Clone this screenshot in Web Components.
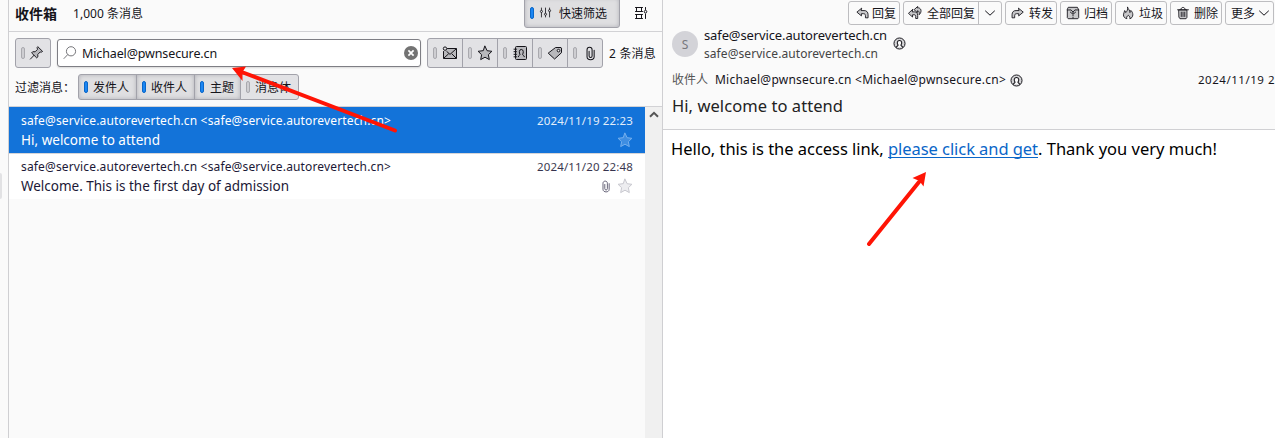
<!DOCTYPE html>
<html lang="zh-CN"><head><meta charset="utf-8"><title>收件箱</title>
<style>
html,body{margin:0;height:100%;overflow:hidden;background:#fafafa}
body{font-family:"Noto Sans","Noto Sans CJK SC",sans-serif;color:#15141a}
</style></head><body>
<mail-app></mail-app>
<script>
const define=(name,html,setup)=>{
  const t=document.createElement('template');t.innerHTML=html;
  customElements.define(name,class extends HTMLElement{
    constructor(){super();this.attachShadow({mode:'open'}).append(t.content.cloneNode(true));}
    connectedCallback(){setup&&setup(this,this.shadowRoot);}
  });
};

/* Text run with a fixed measure: tracking is adjusted so the run fills the width in "w". */
define('ui-text',`<style>:host{display:block;flex:none;white-space:pre;width:max-content}span{display:inline-block}:host([link]) span{text-decoration:underline;text-decoration-thickness:1px;text-underline-offset:2px;text-decoration-skip-ink:none}</style><span><slot></slot></span>`,(el,r)=>{
  const s=r.querySelector('span'),w=+el.getAttribute('w'),n=[...el.textContent].length;
  if(!w)return;
  const fit=()=>{
    s.style.letterSpacing='0';
    const d=(w-s.getBoundingClientRect().width)/n;
    s.style.letterSpacing=d+'px';
    el.style.width=w+'px';
  };
  fit();
});

const G='stroke="currentColor" stroke-linejoin="round" stroke-linecap="round"';
const replyPath='M6.2 2.700 1 7l5.200 4.300V8.800h2.400c1.600 0 2.200.9 2.200 2.200v2.500h3V10c0-3.200-1.800-4.800-4.600-4.800H6.200z';
const ICONS={
 pin:`<path ${G} fill="#b8b8bc" d="M9.6 1.5l4.9 4.8-1.4.8-1.2-.2-2.6 2.7.2 2.4-1.3 1.2-5.4-5.3 1.2-1.3 2.5.1 2.6-2.6-.4-1.4zM5.4 10.4 1.5 14.5"/>`,
 search:`<circle cx="9" cy="6.3" r="4.6" fill="none" stroke="currentColor"/><path ${G} fill="none" d="M5.7 9.6 2 13.5"/>`,
 mail:`<path ${G} fill="#b8b8bc" d="M5.5 3.5h9v10h-13v-7"/><path ${G} fill="none" d="M2 13l4.4-4M14 13l-4-4M14 4 8 9.4 4.8 6.5"/><circle cx="3" cy="3.6" r="1.7" fill="#e3e3e6" stroke="currentColor"/>`,
 star:`<path ${G} fill="var(--fill,#b8b8bc)" d="M8 1.2l2.1 4.5 4.8.6-3.5 3.4.9 4.9L8 12.2l-4.3 2.4.9-4.9L1.1 6.3l4.8-.6z"/>`,
 book:`<rect x="3.5" y="1.5" width="11" height="13" rx="1" fill="#b8b8bc" stroke="currentColor"/><path ${G} fill="none" d="M2 4.2h2.5M2 6.7h2.5M2 9.3h2.5M2 11.8h2.5M6.3 11.7c0-1.7 1.7-1 1.7-2.3C7 8 6.9 4.4 9.3 4.4S11.6 8 10.6 9.4c0 1.3 1.7.6 1.7 2.3"/>`,
 tag:`<path ${G} fill="#b8b8bc" d="M9 2.5h5l.5.6v4.6L7.6 14 1.5 8.4z"/><circle cx="11.5" cy="5.6" r="1.3" fill="#eee" stroke="currentColor"/>`,
 clip:`<path ${G} stroke-width="1.100" fill="none" d="M6.500 5.500v5.200c0 2.200 3.200 2.200 3.200 0V4c0-3.500-5.400-3.500-5.400 0v7.500c0 4.200 7.600 4.200 7.600 0V4.500"/>`,
 clear:`<circle cx="8" cy="8" r="7" fill="#737373"/><path d="M5.4 5.4l5.2 5.2M10.6 5.4l-5.2 5.2" stroke="#fff" stroke-width="1.7"/>`,
 sliders:`<path ${G} fill="none" d="M3 2.5V5M3 8.5v5M8 2.5v6M8 12v1.5M13 2.5V4M13 7.5v6"/><g fill="none" stroke="currentColor"><circle cx="3" cy="6.7" r="1.3"/><circle cx="8" cy="10.2" r="1.3"/><circle cx="13" cy="5.7" r="1.3"/></g>`,
 display:`<path ${G} fill="none" d="M2.500 2.500h7M2.500 6.500h7M2.500 9.500h7M2.500 13.500h7M3.500 2.500v4M8.500 2.500v4M3.500 9.500v4M8.500 9.500v4M12.500 2.500v2M12.500 9v4.500"/><circle cx="12.5" cy="6.7" r="1.3" fill="none" stroke="currentColor"/>`,
 reply:`<path ${G} fill="#c8c8ca" d="${replyPath}"/>`,
 forward:`<g transform="matrix(-1 0 0 1 15 0)"><path ${G} fill="#c8c8ca" d="${replyPath}"/></g>`,
 replyall:`<path ${G} fill="#c8c8ca" d="M10.800 .8 7 4.200l1.600 1.600 2.200 1.700V5.400c1.900.2 2.200 1.800 1.900 4.600 3-2.500 3-7-.5-7.900l-1.400-.1z"/><path ${G} fill="#c8c8ca" d="M5.200 4 .5 8.400l4.700 4.200V10h1.600c1.700 0 2 .9 2 2v2.300h2.300v-3.500c0-2.900-1.500-4.100-3.800-4.100H5.200z"/>`,
 archive:`<path ${G} fill="#c8c8ca" d="M3 1.5h10l1.5 2.8v9l-1 1.2h-11l-1-1.2v-9z"/><path ${G} fill="none" d="M1.5 4.5h4.3L8 7l2.2-2.5h4.3M5 7l3 2.5L11 7M8 7v1.5M8 10.5v.8M8 13v.8"/>`,
 junk:`<path ${G} fill="#c8c8ca" d="M7.5 1.5c.5 2.3 3 3.3 2.7 6 .9-.4 1-1.5 1-2.5 1.6 1.6 2.3 3 2.3 5 0 2.500-1.600 4.200-3.400 4.500.6-1.300-.4-2.700-1.800-4-1.500 1.200-2.300 2.500-1.600 4-2.300-.5-3.900-2-3.900-4.400C2.800 8 4 7.300 4.200 5.200c.9.7 1.100 1.300 1.200 2.300C7 6 8 4 7.500 1.500z"/>`,
 trash:`<path ${G} fill="#c8c8ca" d="M3.500 4.500h9v8.500l-1 1.500h-7l-1-1.500z"/><path ${G} fill="none" d="M1.800 4.300h12.400M5.500 4c0-3.300 5-3.300 5 0M6 7v5M8 7v5M10 7v5"/>`,
 chevron:`<path ${G} fill="none" d="M3.500 6 8 10.200 12.500 6"/>`,
 up:`<path fill="none" stroke="#555" stroke-width="2" d="M4 9.800 8 5.800l4 4"/>`,
 person:`<circle cx="8" cy="8" r="6.800" fill="#d5d5d7" stroke="currentColor" stroke-width="1.200"/><path ${G} fill="#fafafa" stroke-width="1.300" d="M4.300 12.500c.2-1.500 2-1.300 2-2.600C4.500 8 5 4.200 8 4.200s3.500 3.800 1.700 5.700c0 1.300 1.800 1.100 2 2.600"/>`
};
define('ui-icon',`<style>:host{display:block;flex:none;width:16px;height:16px}svg{display:block;width:100%;height:100%;overflow:visible}</style><svg viewBox="0 0 16 16"></svg>`,(el,r)=>{r.querySelector('svg').innerHTML=ICONS[el.getAttribute('name')];});

/* Toggle with an indicator bar on its left edge; [on] is the pressed state. */
define('toggle-button',`<style>
:host{display:flex;box-sizing:border-box;align-items:center;background:#e2e2e5;border:1px solid #a2a2aa;height:30px;font-size:12px;line-height:18px;padding-left:5px}
:host([on]){background:#dfdfe1;box-shadow:inset 0 0 4px #b0b0b7}
i{flex:none;box-sizing:border-box;width:4px;height:12px;border:1px solid #a9a9ae;border-radius:2px;background:#ceced2}
:host([on]) i{border-color:#0967c9;background:#1c86f2}
::slotted(ui-text){padding-top:2px}
</style><i></i><slot></slot>`);

define('action-button',`<style>:host{display:flex;box-sizing:border-box;flex:none;align-items:center;height:24px;width:52px;border:1px solid #bdbdc0;border-radius:3px;background:#fafafa;padding-left:7px;gap:3px;font-size:12px;line-height:18px}ui-icon{width:14px;height:14px}::slotted(ui-text){padding-top:2px}</style><ui-icon></ui-icon><slot></slot>`,(el,r)=>{
  const i=r.querySelector('ui-icon'),n=el.getAttribute('icon');
  if(!n){i.remove();return}
  const c=document.createElement('ui-icon');c.setAttribute('name',n);i.replaceWith(c);
});

define('message-row',`<style>
:host{display:grid;box-sizing:border-box;height:45px;grid-template:18px 20px/1fr auto;row-gap:0;padding:4px 12px 3px 12px;background:#fff;color:#1b1836;font-size:12px;line-height:18px}
:host([selected]){background:#1373d9;color:#fff;border-bottom:1px solid #d5d5d8;height:47px;padding-top:5px}
.s{font-size:13.500px;line-height:20px}.d{opacity:.88;font-size:11.500px}
.m{display:flex;justify-content:flex-end;align-items:center;gap:3px}
</style><slot name="from"></slot><div class="d"><slot name="date"></slot></div><div class="s"><slot name="subject"></slot></div><div class="m"><slot name="marks"></slot></div>`);

define('list-pane',`<style>
:host{display:flex;flex-direction:column;box-sizing:border-box;width:655px;flex:none;border:solid #cfcfd2;border-width:0 1px;background:#fafafa}
.head{display:flex;box-sizing:border-box;height:32px;border-bottom:1px solid #d2d2d5;padding-left:6px;line-height:20px;font-size:12px;align-items:flex-start}
.head>ui-text{margin-top:4px}
.title{font-size:14px;font-weight:700;margin-right:16px}
.quick{margin:-3px 13px 0 auto;width:96px;height:31px;border-radius:3px}
.head>ui-icon{margin:5px 13px 0 0}
.bar{display:flex;align-items:center;height:30px;padding:6px 0 0 6px;font-size:12px;line-height:18px}
.pin{width:36px;border-radius:3px;margin-right:6px}
.search{display:flex;align-items:center;box-sizing:border-box;width:364px;height:28px;border:1px solid #7e7e84;border-radius:3px;background:#fff;padding:0 1px 0 4px;box-shadow:0 1px 2px #0002}
.search ui-text{margin:0 auto 0 4px;padding-top:2px}
.group{display:flex}.group>*{margin-right:-1px}.group>:first-child{border-radius:3px 0 0 3px}.group>:last-child{border-radius:0 3px 3px 0}
.kinds{margin:0 8px 0 6px}.kinds>*{width:36px}
.terms{display:flex;align-items:center;padding:6px 0 0 6px;height:26px;font-size:12px;line-height:18px}
.terms toggle-button{height:26px}
.list{display:flex;flex:1;margin-top:6px;border-top:1px solid #d2d2d5}
.rows{flex:1}.scroll{width:17px;background:#f0f0f0}
.scroll ui-icon{margin:0 1px}
</style>
<div class="head"><ui-text class="title" w="42">收件箱</ui-text><ui-text w="70">1,000 条消息</ui-text>
<toggle-button class="quick" on><ui-icon name="sliders" style="width:13px;height:13px;margin:0 7px 0 5px"></ui-icon><ui-text w="48">快速筛选</ui-text></toggle-button><ui-icon name="display"></ui-icon></div>
<div class="bar"><toggle-button class="pin"><ui-icon name="pin" style="width:15px;margin-left:4px"></ui-icon></toggle-button>
<div class="search"><ui-icon name="search" style="color:#77777b"></ui-icon><ui-text w="135" style="font-size:12.500px">Michael@pwnsecure.cn</ui-text><ui-icon name="clear"></ui-icon></div>
<div class="group kinds"><toggle-button><ui-icon name="mail" style="margin-left:5px"></ui-icon></toggle-button><toggle-button><ui-icon name="star" style="margin-left:5px"></ui-icon></toggle-button><toggle-button><ui-icon name="book" style="margin-left:5px"></ui-icon></toggle-button><toggle-button><ui-icon name="tag" style="margin-left:5px"></ui-icon></toggle-button><toggle-button><ui-icon name="clip" style="margin-left:6px;width:15px;height:15px"></ui-icon></toggle-button></div>
<ui-text w="47" style="padding-top:2px;margin-left:-1px">2 条消息</ui-text></div>
<div class="terms"><ui-text w="60" style="margin-right:3px;padding-top:2px">过滤消息：</ui-text><div class="group">
<toggle-button on style="width:59px"><ui-text w="36" style="margin-left:5px">发件人</ui-text></toggle-button><toggle-button on style="width:59px"><ui-text w="36" style="margin-left:5px">收件人</ui-text></toggle-button><toggle-button on style="width:47px"><ui-text w="24" style="margin-left:6px">主题</ui-text></toggle-button><toggle-button style="width:59px"><ui-text w="36" style="margin-left:5px">消息体</ui-text></toggle-button></div></div>
<div class="list"><div class="rows">
<message-row selected><ui-text slot="from" w="370">safe@service.autorevertech.cn &lt;safe@service.autorevertech.cn&gt;</ui-text><ui-text slot="date" w="96">2024/11/19 22:23</ui-text><ui-text slot="subject" w="139">Hi, welcome to attend</ui-text><ui-icon slot="marks" name="star" style="color:#76b0ee;--fill:#3f8ee2"></ui-icon></message-row>
<message-row><ui-text slot="from" w="370">safe@service.autorevertech.cn &lt;safe@service.autorevertech.cn&gt;</ui-text><ui-text slot="date" w="96">2024/11/20 22:48</ui-text><ui-text slot="subject" w="268">Welcome. This is the first day of admission</ui-text><ui-icon slot="marks" name="clip" style="height:13px;color:#55536a"></ui-icon><ui-icon slot="marks" name="star" style="color:#c8c8cf;--fill:#ededf0"></ui-icon></message-row>
</div><div class="scroll"><ui-icon name="up"></ui-icon></div></div>`);

define('message-pane',`<style>
:host{display:flex;flex-direction:column;flex:1;min-width:0;background:#fff}
.head{box-sizing:border-box;height:130px;border-bottom:1px solid #d0d0d3;background:#fafafa;padding:1px 0 0 9px;overflow:hidden}
.actions{display:flex;justify-content:flex-end;gap:3px;padding-right:1px;height:24px}
.split{display:flex;align-items:center;justify-content:center;align-self:stretch;width:22px;border-left:1px solid #bdbdc0;margin-left:0}
.from{display:flex;align-items:center;height:38px}
.avatar{display:flex;align-items:center;justify-content:center;width:26px;height:26px;border-radius:50%;background:#d3d3d8;color:#77777c;font-size:12px;margin-right:6px}
.names{height:36px}
.to{display:flex;align-items:center;height:18px;margin-top:8px;font-size:12px;line-height:18px;white-space:nowrap}
.subject{font-size:16.500px;line-height:24px;margin-top:5px;color:#222}
.body{display:flex;padding:7px 0 0 8px;font-size:16.500px;line-height:24px;color:#000}
.body a{color:#0a66c8}
ui-icon.p{width:13px;height:13px}
</style>
<div class="head"><div class="actions">
<action-button icon="reply"><ui-text w="24" style="margin-left:-1px">回复</ui-text></action-button>
<action-button icon="replyall" style="width:99px;padding-left:4px"><ui-text w="48" style="margin-left:2px">全部回复</ui-text><div class="split"><ui-icon name="chevron"></ui-icon></div></action-button>
<action-button icon="forward" style="padding-left:5px"><ui-text w="24" style="margin-left:1px">转发</ui-text></action-button>
<action-button icon="archive" style="padding-left:5px"><ui-text w="24" style="margin-left:1px">归档</ui-text></action-button>
<action-button icon="junk" style="padding-left:5px"><ui-text w="24" style="margin-left:1px">垃圾</ui-text></action-button>
<action-button icon="trash" style="padding-left:5px"><ui-text w="24" style="margin-left:1px">删除</ui-text></action-button>
<action-button style="width:49px;padding-left:5px;gap:0"><ui-text w="24">更多</ui-text><ui-icon name="chevron" style="margin-left:1px"></ui-icon></action-button></div>
<div class="from"><div class="avatar">S</div><div class="names"><ui-text w="183" style="font-size:13px;line-height:19px">safe@service.autorevertech.cn</ui-text><ui-text w="174" style="font-size:12px;line-height:17px;color:#444">safe@service.autorevertech.cn</ui-text></div><ui-icon class="p" name="person" style="margin:-1px 0 0 6px"></ui-icon></div>
<div class="to"><ui-text w="36" style="color:#555;margin-right:7px">收件人</ui-text><ui-text w="291" style="margin-right:4px">Michael@pwnsecure.cn &lt;Michael@pwnsecure.cn&gt;</ui-text><ui-icon class="p" name="person"></ui-icon><ui-text w="77" style="margin-left:175px;font-size:11.500px">2024/11/19 2</ui-text></div>
<ui-text class="subject" w="171">Hi, welcome to attend</ui-text></div>
<div class="body"><ui-text w="217">Hello, this is the access link, </ui-text><a><ui-text link w="150">please click and get</ui-text></a><ui-text w="179">. Thank you very much!</ui-text></div>`);

define('mail-app',`<style>
:host{display:flex;position:relative;width:1275px;height:438px;overflow:hidden}
.rail{width:8px;flex:none;background:#fafafa;display:flex}.rail i{width:2px;height:26px;margin-top:173px;background:#e2e2e4;border-radius:0 2px 2px 0}
.marks{position:absolute;inset:0;width:1275px;height:438px;pointer-events:none}
</style><div class="rail"><i></i></div><list-pane></list-pane><message-pane></message-pane>
<svg class="marks" viewBox="0 0 1275 438"><g stroke="#ff1405" stroke-width="4" stroke-linecap="round" fill="#ff1405"><path d="M395 130.500 243 72.500M869 244 919 182"/><g stroke="none"><path d="M232 68l14-1.500-3.500 5.500 0 9z"/><path d="M926 172l-2.500 14.500-4-5.500-7-3z"/></g></g></svg>`);
</script></body></html>
